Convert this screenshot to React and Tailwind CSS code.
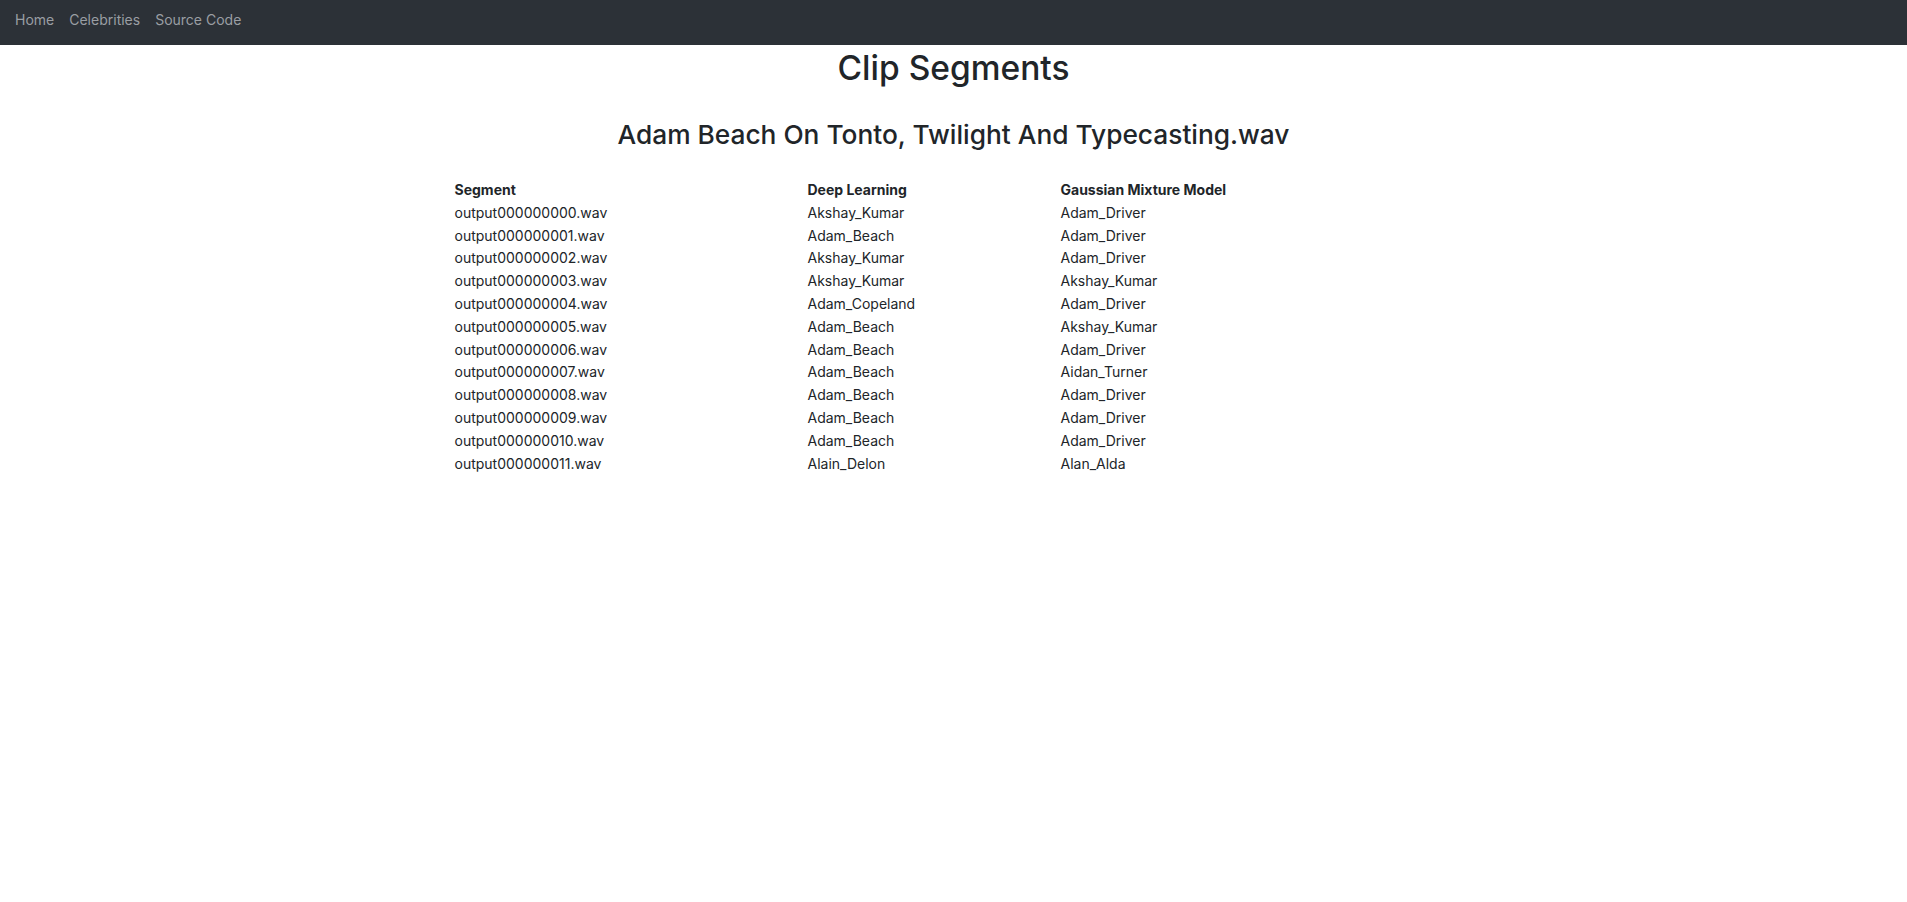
import React from "react";

const rows = [
  ["output000000000.wav", "Akshay_Kumar", "Adam_Driver"],
  ["output000000001.wav", "Adam_Beach", "Adam_Driver"],
  ["output000000002.wav", "Akshay_Kumar", "Adam_Driver"],
  ["output000000003.wav", "Akshay_Kumar", "Akshay_Kumar"],
  ["output000000004.wav", "Adam_Copeland", "Adam_Driver"],
  ["output000000005.wav", "Adam_Beach", "Akshay_Kumar"],
  ["output000000006.wav", "Adam_Beach", "Adam_Driver"],
  ["output000000007.wav", "Adam_Beach", "Aidan_Turner"],
  ["output000000008.wav", "Adam_Beach", "Adam_Driver"],
  ["output000000009.wav", "Adam_Beach", "Adam_Driver"],
  ["output000000010.wav", "Adam_Beach", "Adam_Driver"],
  ["output000000011.wav", "Alain_Delon", "Alan_Alda"],
];

export default function App() {
  return (
    <div
      className="min-h-screen bg-white text-[#212529]"
      style={{ fontFamily: "Inter, 'Liberation Sans', sans-serif" }}
    >
      <nav className="h-[45px] bg-[#2c3137] flex items-center px-[15px] pb-[5px] gap-[15px] text-[14px] text-[#9a9ea3]">
        <a className="leading-none">Home</a>
        <a className="leading-none">Celebrities</a>
        <a className="leading-none">Source Code</a>
      </nav>
      <h1 className="text-center text-[33.5px] leading-[45px] font-medium pt-[1px]">Clip Segments</h1>
      <h2 className="text-center text-[26.3px] leading-[36px] font-medium mt-[26px]">
        Adam Beach On Tonto, Twilight And Typecasting.wav
      </h2>
      <div className="flex justify-center mt-[26px]">
        <table className="w-[1000px] text-[14px] leading-[22.8px] border-collapse">
          <thead>
            <tr className="text-left font-bold">
              <th className="w-[354px] p-0 pl-[1px]">Segment</th>
              <th className="w-[253px] p-0">Deep Learning</th>
              <th className="p-0">Gaussian Mixture Model</th>
            </tr>
          </thead>
          <tbody>
            {rows.map((r) => (
              <tr key={r[0]}>
                <td className="p-0 pl-[1px]">{r[0]}</td>
                <td className="p-0">{r[1]}</td>
                <td className="p-0">{r[2]}</td>
              </tr>
            ))}
          </tbody>
        </table>
      </div>
    </div>
  );
}
